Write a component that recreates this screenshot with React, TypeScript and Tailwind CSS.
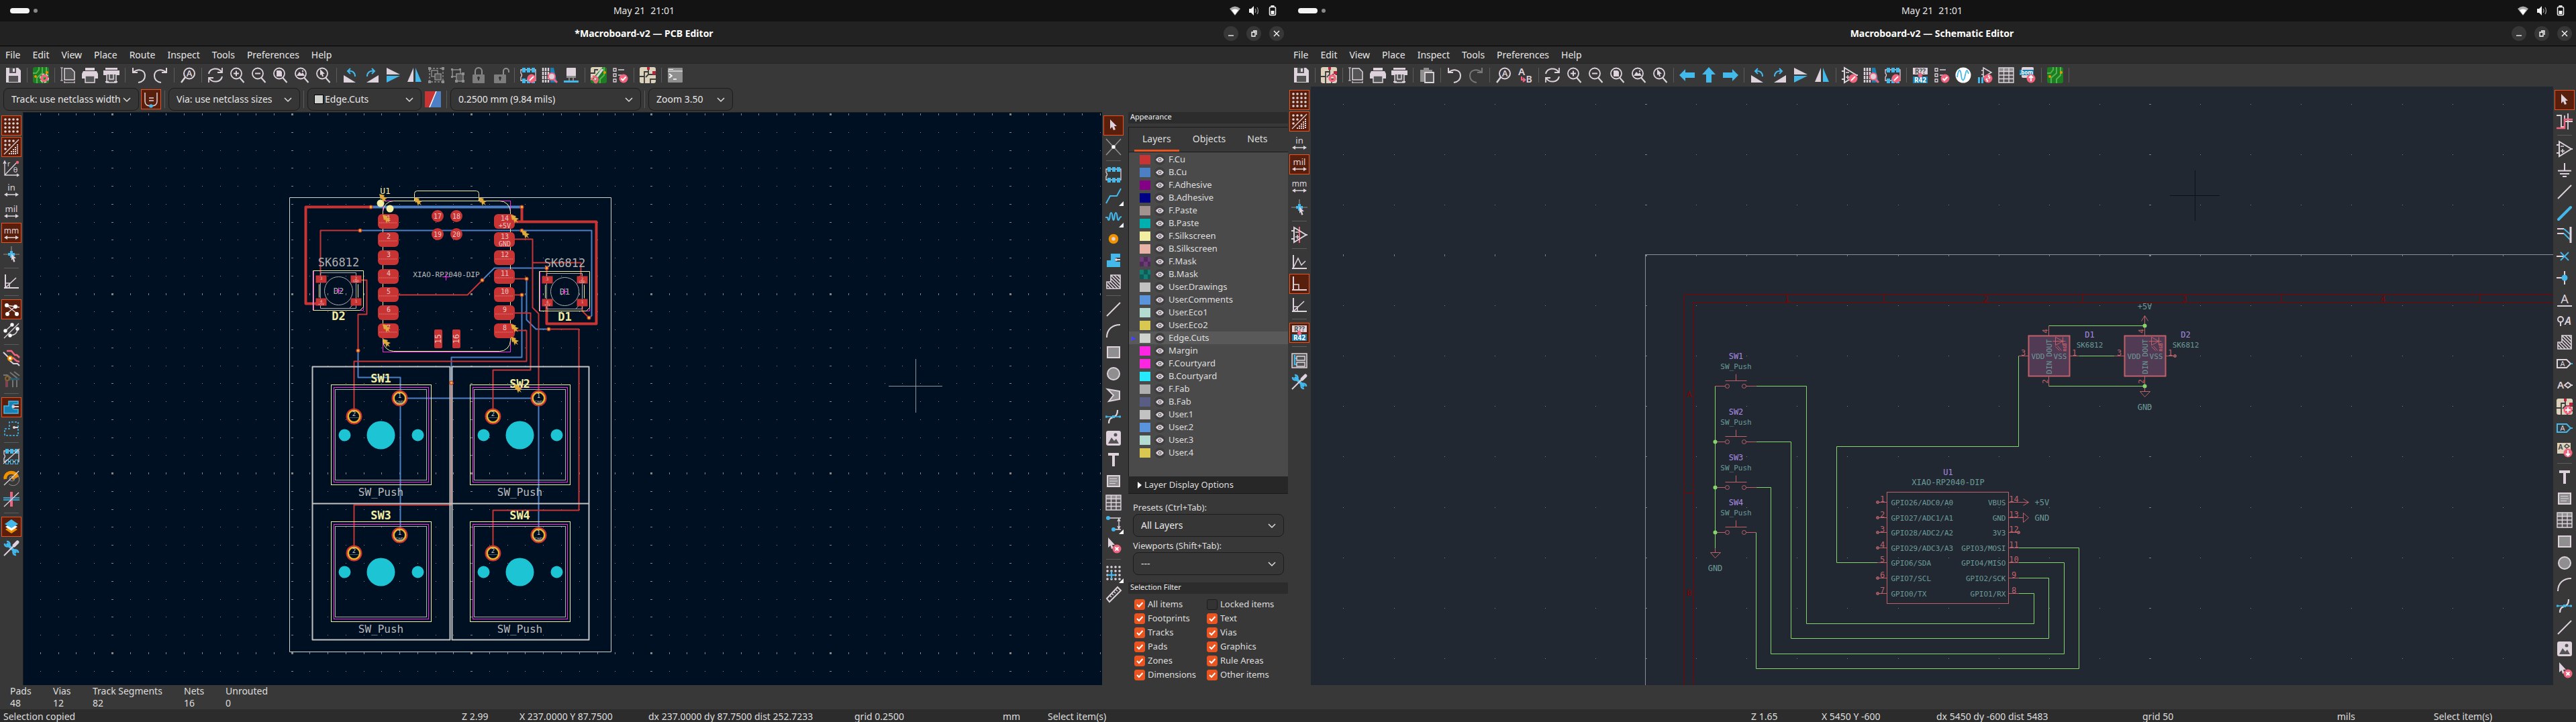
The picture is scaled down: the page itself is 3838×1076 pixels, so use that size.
import { useState } from "react";
import type { ReactNode } from "react";

const L = "#ded3dd";
const B = "#42b8eb";
const P = "#f2647e";
const O = "#f29100";
const G = "#8f8f8f";
const D = "#545454";

const line = { fill: "none", stroke: L, strokeWidth: 2 } as const;
const blue = { fill: "none", stroke: B, strokeWidth: 2 } as const;
const iconText = { fontFamily: "Noto Sans, sans-serif", textAnchor: "middle" } as const;

const magnifier = (
  <>
    <circle cx="11" cy="9.500" r="8" {...line} strokeWidth={1.800} />
    <path d="M16 15.500L22.500 23" {...line} strokeWidth={2.200} />
  </>
);
const badge = (mark: string) => (
  <>
    <circle cx="17" cy="17" r="6.500" fill={P} />
    <path d={mark} fill="none" stroke="#fff" strokeWidth="2" />
  </>
);
const pencil = badge("M14 20L20 14");
const check = badge("M13.500 17L16 19.500L20.500 14.500");
const axes = <path d="M3 1V22M1 21H23" {...line} />;
const chip = (
  <>
    <path d="M1 4H23V20H1V15Q4 12 1 9Z" {...line} strokeWidth={1.300} />
    <path d="M3 1h5v7h-5zM10 1h5v7h-5zM17 1h5v7h-5zM3 17h5v7h-5zM10 17h5v7h-5zM17 17h5v7h-5z" fill={B} />
  </>
);
const board = (
  <>
    <rect width="24" height="24" rx="3" fill="#1c7d22" />
    <path d="M0 9H5L9 4V0M6 24V16L14 9V0M14 24V18L20 12V0" fill="none" stroke="#53b34f" strokeWidth="2" />
    <circle cx="4" cy="14" r="2" fill={O} />
    <circle cx="21" cy="8" r="2" fill={O} />
  </>
);
const sheet = (
  <>
    <rect width="24" height="24" rx="3" fill="#dcd2bc" />
    <path d="M0 14H7V7H13M13 0V11H24M7 14V24M13 11L9 15M16 24V18H24" fill="none" stroke="#3b3b3b" strokeWidth="1.800" />
    <path d="M11 0h4v4h-4zM19 6h5v5h-5z" fill="#b8243c" />
  </>
);
const gear = (
  <>
    <circle cx="17" cy="16.500" r="5" fill="none" stroke={L} strokeWidth="4" strokeDasharray="3 2" />
    <circle cx="17" cy="16.500" r="4" fill="none" stroke={P} strokeWidth="3.500" />
  </>
);
const padlock = (open: boolean) => (
  <>
    <rect x="2" y="11" width="18" height="13" rx="1" fill={G} opacity="0.800" />
    <path d={open ? "M16 11V6a4 4 0 0 1 8 0V8" : "M6 11V6a5 5 0 0 1 10 0V11"} fill="none" stroke={G} strokeWidth="2" />
    <circle cx="11" cy="16" r="2" fill="#333" />
    <path d="M11 16V20" stroke="#333" strokeWidth="2" />
  </>
);
const corner = <path d="M24 17V24H17Z" fill="#fff" transform="translate(3 3)" />;
const unit = (name: string) => (
  <>
    <text x="12" y="13" fontSize={name === "mm" ? 12 : 13} fill={L} {...iconText}>{name}</text>
    <path d="M3 19H21" {...line} strokeWidth={1.500} />
    <path d="M1 19L6 16V22ZM23 19L18 16V22Z" fill={L} />
  </>
);
const hatch = (
  <>
    <path d="M2 22V12H8V2H22V22Z" {...line} strokeWidth={1.600} />
    <path d="M8 2L22 16M13 2L22 11M18 2L22 6M8 7L22 21M8 12L18 22M4 13L13 22M2 16L8 22" {...line} strokeWidth={1.700} />
  </>
);
const copperZone = (
  <>
    <path d="M2 22V12H8V2H22V8H17a3 3 0 0 0 0 6H22V22Z" fill={B} />
    <path d="M15 11H22" {...line} />
    <circle cx="16" cy="11" r="2" fill={L} />
  </>
);
const opamp = (
  <>
    <path d="M4 1L22 12L4 23ZM0 6H4M0 18H4M20 12H24" {...line} />
    <path d="M6 8H11M6 15H12M9 12V18" {...line} strokeWidth={1.500} />
  </>
);
const arrow = <path d="M7 3L17 13H13L15 18L12 19L10 14L7 17Z" fill={L} />;
const tagShape = "M1 6H15L21 12L15 18H1Z";
const refs = (
  <>
    <rect x="1" y="1" width="22" height="10" fill={L} />
    <rect x="1" y="14" width="22" height="10" fill="#1880b3" />
    <text x="12" y="10" fontSize="10" fontWeight="700" fill="#545454" {...iconText}>R??</text>
    <path d="M12 9V13" stroke={P} strokeWidth="4" />
    <path d="M8 12H16L12 17Z" fill={P} />
    <text x="12" y="23" fontSize="10" fontWeight="700" fill="#fff" {...iconText}>R42</text>
  </>
);
const dots = (rows: number[][]) =>
  rows.map((xs, r) => xs.map((x) => <circle key={`${r}-${x}`} cx={x} cy={3 + r * 6} r="1.800" fill={L} />));

const icons: Record<string, ReactNode> = {
  save: (
    <>
      <path d="M1 1H19L23 5V23H1Z" fill={L} />
      <path d="M6 1H16V9H6ZM5 13H19V22H5Z" fill={D} />
      <path d="M11 2H14V7H11Z" fill={L} />
    </>
  ),
  boardSetup: <>{board}{gear}</>,
  sheetSetup: <>{sheet}{gear}</>,
  page: (
    <>
      <path d="M6 2H16L21 7V19H6Z" fill={D} stroke={L} strokeWidth="1.500" />
      <path d="M2 1V20M0 1H4M0 20H4M6 23H21M6 21V24M21 21V24" {...line} strokeWidth={1.200} />
    </>
  ),
  print: (
    <>
      <path d="M5 1H19V5H5ZM2 6H22L24 10V17H0V10Z" fill={L} />
      <path d="M5 13H19V23H5Z" fill={D} stroke={L} strokeWidth="1.500" />
    </>
  ),
  plot: (
    <>
      <path d="M3 1H21V4H3ZM0 5H24V12H0Z" fill={L} />
      <path d="M5 11V23H19V11M9 11V18H15V11" fill={D} stroke={L} strokeWidth="1.500" />
      <path d="M3 22H8M16 22H21" {...line} />
    </>
  ),
  paste: (
    <>
      <path d="M2 4H20V22H2ZM7 1H15V5H7Z" fill={G} />
      <path d="M9 8H22V23H9Z" fill={D} stroke={L} strokeWidth="1.800" />
    </>
  ),
  undo: <path d="M3 1V8H10M3 8C12 1 21 5 21 13C21 19 17 22 11 23" {...line} />,
  redo: <path d="M21 1V8H14M21 8C12 1 3 5 3 13C3 19 7 22 13 23" {...line} />,
  redoOff: <path d="M21 1V8H14M21 8C12 1 3 5 3 13C3 19 7 22 13 23" {...line} stroke="#777" />,
  find: (
    <>
      <circle cx="14" cy="9.500" r="8" {...line} />
      <path d="M8 15L2 23" {...line} strokeWidth={2.500} />
      <text x="14" y="14" fontSize="13" fontWeight="600" fill={L} {...iconText}>A</text>
    </>
  ),
  replace: (
    <>
      <text x="7" y="12" fontSize="15" fontWeight="600" fill={L} {...iconText}>A</text>
      <text x="18" y="23" fontSize="14" fontWeight="600" fill={L} {...iconText}>B</text>
      <path d="M7 14V19H12M9 16L12.500 19L9 22" fill="none" stroke={P} strokeWidth="2" />
    </>
  ),
  refresh: (
    <>
      <path d="M2 10C4 1 16 0 21 7M22 14C20 23 8 24 3 17" {...line} />
      <path d="M22 1V8H15M2 23V16H9" {...line} strokeWidth={1.800} />
    </>
  ),
  zoomIn: <>{magnifier}<path d="M7 9.500H15M11 5.500V13.500" {...line} /></>,
  zoomOut: <>{magnifier}<path d="M7 9.500H15" {...line} /></>,
  zoomFit: <>{magnifier}<path d="M7 5H13L15 7V14H7Z" fill={L} /></>,
  zoomObjects: <>{magnifier}<path d="M5 13L9 7L12 10L14 8L17 13Z" fill={L} /><circle cx="14" cy="6" r="1.200" fill={L} /></>,
  zoomSelection: <>{magnifier}<path d="M8 3L15 10H12L13 14H11L10 11L8 12Z" fill={L} /></>,
  rotateCcw: <><path d="M2 23V12L20 23Z" fill={L} /><path d="M19 14C19 8 15 5 9 6M12 2L8 6L12 10" {...blue} /></>,
  rotateCw: <><path d="M22 23V12L4 23Z" fill={L} /><path d="M5 14C5 8 9 5 15 6M12 2L16 6L12 10" {...blue} /></>,
  flipV: <><path d="M2 1L22 11H2Z" fill={L} /><path d="M2 23L22 13H2Z" fill={B} /></>,
  flipH: <><path d="M10 1V22H1Z" fill={L} /><path d="M13 1V22H22Z" fill={B} /></>,
  group: (
    <g fill="none" stroke={G} strokeWidth="1.400">
      <rect x="2" y="2" width="20" height="20" strokeDasharray="3 2" />
      <rect x="5" y="5" width="9" height="9" />
      <rect x="10" y="10" width="9" height="9" fill={D} />
      <path d="M0 0h4v4h-4zM20 0h4v4h-4zM0 20h4v4h-4zM20 20h4v4h-4z" fill={G} stroke="none" />
    </g>
  ),
  ungroup: (
    <g fill="none" stroke={G} strokeWidth="1.500">
      <rect x="4" y="4" width="12" height="10" />
      <rect x="10" y="10" width="10" height="11" fill={D} />
      <path d="M2 2h3v3h-3zM14 2h3v3h-3zM2 13h3v3h-3zM18 8h4v4h-4zM8 19h4v4h-4zM18 19h4v4h-4z" fill={G} stroke="none" />
    </g>
  ),
  lock: padlock(false),
  unlock: padlock(true),
  footprintEdit: <>{chip}{pencil}</>,
  library: (
    <>
      <path d="M2 1V23M6 1V23M10 1V23" {...line} strokeWidth={2.500} strokeDasharray="5 1" />
      <path d="M13 1H18L23 23H13Z" fill="#1880b3" />
      <circle cx="15" cy="14" r="5" fill={L} stroke={P} strokeWidth="2" />
      <path d="M18 18L23 23" stroke={P} strokeWidth="3" />
    </>
  ),
  fromSchematic: (
    <>
      <rect x="5" y="1" width="14" height="15" rx="1" fill={L} />
      <path d="M5 13H19V16H5Z" fill={G} />
      <path d="M9 16V20M15 16V20" {...line} strokeWidth={1} />
      <path d="M1 20H23V23H1Z" fill={B} />
    </>
  ),
  updatePcb: <>{board}<path d="M3 0H18L0 20V3Q0 0 3 0Z" fill="#dcd2bc" /><path d="M0 9H6V4H11" fill="none" stroke="#3b3b3b" strokeWidth="1.800" /><path d="M18 3L6 19" stroke={L} strokeWidth="3" /><path d="M1 16L9 24M3 14C10 14 12 18 9 22" stroke={P} strokeWidth="3" fill="none" /></>,
  drc: <><path d="M2 2h4v4h-4zM2 10h4v4h-4zM2 18h4v4h-4z" {...line} strokeWidth={1.300} /><path d="M9 4H18M9 12H14" {...line} strokeWidth={1.500} />{check}</>,
  sheet,
  board,
  console: (
    <>
      <rect x="1" y="1" width="22" height="22" rx="1" fill={G} />
      <path d="M1 6H23M2 3.500H9" stroke="#fff" strokeWidth="1.200" />
      <path d="M3 10L7 13L3 16M9 18H14" fill="none" stroke="#fff" strokeWidth="1.600" />
    </>
  ),
  arrowLeft: <path d="M0 12L9 3V8H23V16H9V21Z" fill={B} />,
  arrowUp: <path d="M12 0L22 11H16V23H8V11H2Z" fill={B} />,
  arrowRight: <path d="M24 12L15 3V8H1V16H15V21Z" fill={B} />,
  symbolEdit: <>{opamp}{pencil}</>,
  annotate: refs,
  simulate: <><circle cx="12" cy="12" r="11.500" fill="#fff" /><path d="M3 15C5 2 8 2 9 12S13 22 15 12S18 4 20 10" fill="none" stroke={B} strokeWidth="1.800" /></>,
  assign: <><path d="M10 1L22 8L10 15ZM7 5H10M7 11H10" {...line} strokeWidth={1.500} /><path d="M2 15h3v9h-3zM7 15h3v9h-3z" fill={B} />{badge("M14 19L16 17M18 17L20 15M17 14L19 13M15 21L17 20")}</>,
  table: (
    <>
      <path d="M1 1H23V6H1Z" fill={G} />
      <path d="M1 6H23V23H1Z" fill={D} />
      <path d="M1 1H23V23H1ZM1 6.500H23M1 12H23M1 17.500H23M8.500 1V23M16 1V23" {...line} strokeWidth={1.400} />
    </>
  ),
  bom: (
    <>
      <rect x="3" y="0" width="18" height="16" rx="2" fill={L} />
      <rect x="0" y="4" width="21" height="8" fill="#1880b3" />
      <text x="10" y="11" fontSize="8" fontWeight="700" fill="#fff" {...iconText}>.bom</text>
      {badge("M17 21V13M14 16L17 13L20 16")}
    </>
  ),
  grid: dots([[3, 9, 15, 21], [3, 9, 15, 21], [3, 9, 15, 21], [3, 9, 15, 21]]),
  gridOverride: (
    <>
      {dots([[3, 9, 15], [3, 9], [3]])}
      <path d="M1 23L23 1" {...line} strokeWidth={1.300} />
      <path d="M21 8V23M18 12V23M15 15V23M12 18V23M9 21V23" {...line} strokeDasharray="2 1" />
    </>
  ),
  polar: (
    <>
      <path d="M2 2V22H23M2 22L21 2M0 5L2 1L4 5M20 20L23 22L20 24" {...line} strokeWidth={1.300} />
      <circle cx="21" cy="3" r="2.200" fill={P} />
      <text x="8" y="9" fontSize="10" fill={L} {...iconText}>r</text>
      <text x="18" y="18" fontSize="11" fill={L} {...iconText}>θ</text>
    </>
  ),
  in: unit("in"),
  mil: unit("mil"),
  mm: unit("mm"),
  crosshair: (
    <>
      <path d="M0 12H24M12 0V14" stroke={G} strokeWidth="1.200" />
      <path d="M7 12H17M12 7V17" stroke={B} strokeWidth="4" />
      <path d="M12 11L19 18H16L17.500 23L15 23.500L14 19L12 21Z" fill={L} />
    </>
  ),
  angle45: <>{axes}<path d="M3 21L19 6M3 14H9V20" {...line} strokeWidth={1.600} /></>,
  angle90: <>{axes}<path d="M3 13H11V20" {...line} strokeWidth={1.500} /></>,
  angleFree: <>{axes}<path d="M3 20L10 6L15 16L21 10" {...line} strokeWidth={1.500} /></>,
  ratsnest: <><path d="M5 6L20 18M5 6L24 9M4 19L19 7M5 6L18 8" {...line} strokeWidth={1.500} />{[[5, 6], [18, 8], [6, 19], [20, 19]].map(([x, y]) => <circle key={x} cx={x} cy={y} r="3" fill="#fff" />)}</>,
  ratsCurved: <><path d="M1 23L23 1M3 12L13 3M10 19Q21 18 21 9" {...line} strokeWidth={1.400} />{[[3, 12], [13, 3], [10, 19], [21, 9]].map(([x, y]) => <circle key={x} cx={x} cy={y} r="2.700" fill="#fff" />)}</>,
  netColors: <><path d="M0 3L8 11V14L15 20H21L24 23" {...line} /><path d="M5 1H12L17 7H20L24 11M14 11L20 16L24 17" fill="none" stroke={P} strokeWidth="2.500" /><circle cx="10" cy="12" r="3" fill="#fff" stroke={O} strokeWidth="2" /></>,
  highContrast: <g fill="none" strokeWidth="2" opacity="0.700"><path d="M0 5H6L14 12V23M10 1L20 9V23M16 0L24 6" stroke={G} /><path d="M5 12V23" stroke="#a14b5e" strokeWidth="4" /><path d="M7 11H24" stroke="#2a6d8a" strokeWidth="3" /><circle cx="6" cy="10" r="3" stroke="#a5712a" /></g>,
  zoneFill: <><path d="M1 21V10H8V3H22V7H17a4 4 0 0 0 0 8H22V21Z" fill="#1880b3" stroke={B} strokeWidth="1.500" /><circle cx="15" cy="11" r="2.200" fill={L} /><path d="M15 11H23" {...line} /></>,
  zoneOutline: <><path d="M2 22V12H9V2H22V22Z" {...blue} strokeWidth={1.500} strokeDasharray="3 2" /><circle cx="16" cy="10" r="2" fill={L} /><path d="M15 10H22" {...line} /></>,
  padSketch: <>{chip}<path d="M4 18h3v5h-3zM11 18h3v5h-3zM18 18h3v5h-3z" fill="#383838" /><path d="M0 23L24 1" {...line} strokeWidth={1.300} /></>,
  viaSketch: <><path d="M3 14a9 8 0 0 1 17 -5L13 13" fill="none" stroke={O} strokeWidth="5" /><circle cx="13" cy="13" r="4" fill="none" stroke={G} /><path d="M21 8A9 9 0 0 1 8 21" fill="none" stroke={G} /><path d="M1 23L23 2" {...line} strokeWidth={1.300} /></>,
  trackSketch: <><path d="M12 1V23" stroke={P} strokeWidth="4" /><path d="M0 10H24M0 13H24" {...blue} strokeWidth={1.500} /><path d="M1 23L23 2" {...line} strokeWidth={1.300} /></>,
  layers: <><path d="M3 16L12 11L21 16L12 22Z" fill={O} /><path d="M3 12L12 7L21 12L12 18Z" fill="#fff" /><path d="M2 8L12 1L22 8L12 14Z" fill={B} /></>,
  tools: <><path d="M5 5L19 19" stroke={B} strokeWidth="4" /><path d="M2 5a4 4 0 0 0 7 3M5 2a4 4 0 0 1 4 6M15 16a4 4 0 0 0 4 6M22 19a4 4 0 0 0-7-3" {...blue} strokeWidth={2.500} /><path d="M1 23L15 9" {...line} /><path d="M16 8L21 3" {...line} strokeWidth={5} strokeLinecap="round" /></>,
  select: arrow,
  highlight: <><path d="M1 0L12 12L23 0M1 24L12 12L23 24" fill="none" stroke={G} strokeWidth="1.600" /><circle cx="12" cy="12" r="2.800" fill="#fff" /></>,
  footprint: chip,
  route: <><path d="M1 23L7 12H17L23 1" {...blue} />{corner}</>,
  tune: <><path d="M0 12H3C4 12 3 16 5 16S6 5 8.500 5S10 16 12 16S13 5 15.500 5S17 16 19 16S20 11 24 11" {...blue} strokeWidth={2.200} />{corner}</>,
  via: <circle cx="12" cy="12" r="5" fill={L} stroke={O} strokeWidth="4.500" />,
  zone: copperZone,
  ruleArea: hatch,
  line: <path d="M2 22L22 2" {...line} />,
  arc: <path d="M2 22C2 10 10 3 22 3" {...line} />,
  rect: <rect x="3" y="4" width="18" height="16" fill={G} stroke={L} strokeWidth="2" />,
  circle: <circle cx="12" cy="12" r="9" fill={G} stroke={L} strokeWidth="2" />,
  polygon: <path d="M3 3L21 6V18L5 21L12 12Z" fill={G} stroke={L} strokeWidth="2" />,
  bezier: <><path d="M5 22C5 8 18 18 18 2" {...line} strokeWidth={2.200} /><path d="M1 12H23" {...blue} strokeWidth={1.500} /><path d="M0 10.500h3v3h-3zM20 10.500h3v3h-3zM10 10h4v4h-4z" fill={B} /></>,
  image: <><rect x="1" y="1" width="22" height="22" rx="3" fill={L} /><path d="M4 20L9 11L13 16L16 13L20 20Z" fill={D} /><circle cx="15" cy="7" r="2.500" fill={D} /></>,
  text: <path d="M4 2H20V6H14V22H10V6H4Z" fill={L} />,
  textBox: <><rect x="3" y="4" width="18" height="16" fill={G} stroke={L} strokeWidth="2" /><path d="M6 8.500H17M6 12H18M6 15.500H15" {...line} strokeWidth={1.200} /></>,
  dimension: <><path d="M4 3H23M12 20H23M20 5V18M18 8L20 4L22 8M18 15L20 19L22 15" {...line} strokeWidth={1.300} /><circle cx="4" cy="3" r="3" fill={B} /><circle cx="12" cy="20" r="3" fill={B} />{corner}</>,
  delete: <><path d="M4 0L14 11H10L12 16L9 17L7.500 12L4 15Z" fill={L} />{badge("M14.500 14.500L19.500 19.500M19.500 14.500L14.500 19.500")}</>,
  gridOrigin: <>{dots([[3, 9, 15, 21], [3, 9, 15, 21], [3, 9, 15, 21], [3, 9, 15, 21]])}<path d="M3 15H15M9 9V21" {...blue} />{corner}</>,
  measure: <><path d="M2 18L18 1L23 6L6 23Z" {...line} /><path d="M7 14L9 16M10 11L12 13M13 8L15 10M16 5L18 7" {...line} strokeWidth={1.500} /></>,
  highlightNet: <><path d="M0 3H7V20H12V3M17 0V24M12 12H24" {...line} strokeWidth={1.800} /><path d="M0 22H12V9H24" fill="none" stroke={P} strokeWidth="2.500" /></>,
  symbol: opamp,
  symbolPins: <><path d="M12 0V24" stroke={P} strokeWidth="2" />{opamp}</>,
  power: <path d="M12 1V12M2 12.500H22M5 17H19M9 21H15" {...line} />,
  bus: <path d="M3 21L21 3" {...blue} strokeWidth={4} strokeLinecap="round" />,
  busEntry: <><path d="M1 3H11M1 10H11" {...line} /><path d="M11 3L20 11M11 10L20 19" {...blue} /><path d="M21 0V24" {...line} strokeWidth={3} /></>,
  noConnect: <><path d="M0 12H12" {...line} /><path d="M6 6L18 18M18 6L6 18" {...blue} strokeWidth={1.800} /></>,
  junction: <><path d="M0 12H12M12 2V22" {...line} /><circle cx="12" cy="12" r="4.500" fill={B} /></>,
  label: <><path d="M1 22H23" {...line} /><text x="12" y="18" fontSize="18" fill={L} {...iconText}>A</text></>,
  netClass: <><circle cx="6" cy="10" r="4" {...line} /><path d="M6 14V20" {...line} /><text x="17" y="18" fontSize="16" fontStyle="italic" fontWeight="600" fill={L} {...iconText}>A</text></>,
  globalLabel: <><path d={tagShape} {...line} /><path d="M21 12H24" {...blue} /><text x="9" y="16" fontSize="11" fill={L} {...iconText}>A</text></>,
  hierLabel: <><text x="6" y="17" fontSize="15" fontWeight="600" fill={L} {...iconText}>A</text><path d="M12 12L17 8L22 12L17 16ZM22 12H24" {...line} /></>,
  addSheet: <>{sheet}{badge("M17 13V21M13 17H21")}</>,
  sheetPin: <><path d={tagShape} {...blue} /><path d="M21 12H24" {...blue} /><text x="9" y="16" fontSize="11" fill={L} {...iconText}>A</text></>,
  syncPins: <><rect x="1" y="2" width="20" height="16" fill="#dcd2bc" /><text x="6" y="12" fontSize="10" fontWeight="700" fill="#444" {...iconText}>A</text><path d="M12 7L15 4L19 7L15 10Z" fill="none" stroke="#444" strokeWidth="1.500" />{badge("M17 13V21M14 18L17 21L20 18")}</>,
  hierarchy: <><path d="M1 2H23V23H1Z" fill={D} stroke={L} strokeWidth="1.500" /><path d="M5 4V18H8M5 9H8" {...blue} /><path d="M8 6H20V12H8ZM8 15H20V21H8Z" {...line} strokeWidth={1.400} /></>,
  refs,
  trackWidth: <><path d="M3 2V15Q3 22 12 22Q21 22 21 15V2M9 10H16M9 14H16" {...line} strokeWidth={1.500} /><circle cx="12" cy="22" r="2.800" fill={B} /></>,
};

function Icon({ name }: { name: string }) {
  return <svg viewBox="0 0 24 24" className="size-6 shrink-0 overflow-visible">{icons[name]}</svg>;
}

// "|" marks a separator, a leading "*" marks a pressed tool
function ToolStrip({ tools, vertical = false }: { tools: string; vertical?: boolean }) {
  return (
    <div role="toolbar" className={vertical ? "flex w-[34px] shrink-0 flex-col items-center pt-[3px]" : "flex h-[34px] items-center pl-1"}>
      {tools.split(" ").map((tool, i) => {
        if (tool === "|") {
          return vertical ? (
            <div key={i} className="flex h-[9px] w-[22px] shrink-0 items-center"><div className="h-px w-full bg-[#5c5c5c]" /></div>
          ) : (
            <div key={i} className="flex w-[9px] shrink-0 justify-center"><div className="h-[22px] w-px bg-[#5c5c5c]" /></div>
          );
        }
        const active = tool.startsWith("*");
        const name = active ? tool.slice(1) : tool;
        return (
          <div key={i} className="flex size-8 shrink-0 items-center justify-center">
            <button aria-label={name} aria-pressed={active} className={`flex size-[30px] items-center justify-center border ${active ? "border-[#e95420] bg-[#58200c]" : "border-transparent"}`}>
              <Icon name={name} />
            </button>
          </div>
        );
      })}
    </div>
  );
}

function Chevron() {
  return (
    <svg viewBox="0 0 12 12" className="pointer-events-none absolute right-3 size-3">
      <path d="M1 4L6 9L11 4" fill="none" stroke="#ddd" strokeWidth="1.500" />
    </svg>
  );
}

function Picker({ label, value, className, swatch, id }: { label?: string; value: string; className: string; swatch?: boolean; id?: string }) {
  return (
    <div className={`relative flex items-center ${className}`}>
      {swatch && <span className="absolute left-[10px] h-[14px] w-[14px] border border-black bg-[#d0d2cd]" />}
      <select id={id} aria-label={label} className={`h-full w-full appearance-none rounded-lg border border-[#1c1c1c] bg-[#363636] text-[#e8e8e8] ${swatch ? "pl-[25px]" : "pl-[11px]"}`}>
        <option>{value}</option>
      </select>
      <Chevron />
    </div>
  );
}

function SystemBar() {
  return (
    <div className="grid h-8 grid-cols-3 items-center bg-[#131313] px-[15px] text-sm text-[#e4e4e4]">
      <div className="flex items-center gap-[6px]">
        <div className="h-2 w-[29px] rounded-full bg-[#f4f4f4]" />
        <div className="size-[6px] rounded-full bg-[#888]" />
      </div>
      <div className="flex justify-center gap-2"><span>May 21</span><span>21:01</span></div>
      <div className="flex justify-end gap-3">
        <svg viewBox="0 0 16 16" className="size-4"><path d="M0 5Q8 -2 16 5L8 15Z" fill="#aaa" /><path d="M3 7Q8 4 13 7L8 14Z" fill="#fff" /></svg>
        <svg viewBox="0 0 16 16" className="size-4"><path d="M1 5H4L8 1V15L4 11H1Z" fill="#f4f4f4" /><path d="M10 5Q12 8 10 11M13 3Q16 8 13 13" fill="none" stroke="#999" strokeWidth="1.300" /></svg>
        <svg viewBox="0 0 16 16" className="size-4"><path d="M5.500 1H10.500" stroke="#f4f4f4" strokeWidth="2" /><rect x="3.500" y="2.500" width="9" height="12" rx="1.500" fill="none" stroke="#f4f4f4" strokeWidth="1.500" /><path d="M5.500 8H10.500V13H5.500Z" fill="#f4f4f4" /></svg>
      </div>
    </div>
  );
}

const windowMarks: Record<string, string> = {
  Minimize: "M7 14H15",
  Restore: "M8 9H13V15H8ZM10 7H15V13",
  Close: "M7 7L15 15M15 7L7 15",
};

function TitleBar({ title }: { title: string }) {
  return (
    <div className="grid h-[37px] grid-cols-[1fr_auto_1fr] items-center border-b border-black bg-[#222] px-[6px]">
      <div />
      <h1 className="text-sm font-bold text-white">{title}</h1>
      <div className="flex justify-end gap-3">
        {Object.entries(windowMarks).map(([name, d]) => (
          <button key={name} aria-label={name} className="size-[22px] rounded-full bg-[#373737]">
            <svg viewBox="0 0 22 22" className="size-[22px]"><path d={d} fill="none" stroke="#fff" strokeWidth="1.300" /></svg>
          </button>
        ))}
      </div>
    </div>
  );
}

function MenuBar({ items }: { items: string[] }) {
  return (
    <nav className="flex h-[26px] items-center gap-[18px] border-b border-[#262626] bg-[#2c2c2c] pl-2 text-sm text-[#e6e6e6]">
      {items.map((item) => <button key={item}>{item}</button>)}
    </nav>
  );
}

// Tick marks: a dot at each grid point, stretched on every tenth row and column
function gridPath(x0: number, y0: number, step: number, fromX: number, toX: number, fromY: number, toY: number) {
  let d = "";
  for (let i = fromX; i <= toX; i++) {
    for (let j = fromY; j <= toY; j++) {
      const w = i % 10 === 0 ? 3 : 1;
      const h = j % 10 === 0 ? 3 : 1;
      const x = Math.round(x0 + i * step) - (w - 1) / 2;
      const y = Math.round(y0 + j * step) - (h - 1) / 2;
      d += `M${x} ${y}h${w}v${h}h-${w}z`;
    }
  }
  return d;
}

const RED = "#c83434";
const BLUE = "#4d7fc4";
const SILK = "#f2eda1";
const FAB = "#afafaf";
const PINK = "#ff26e2";
const stroke = "DejaVu Sans Mono, monospace";

function Marker({ x, y }: { x: number; y: number }) {
  return <path transform={`translate(${x} ${y})`} d="M0 0L8 2L6.500 4L12 6L8.500 8L11 12L7 9.500L6 13L4 7L2 8Z" fill="#e0aa3c" />;
}

function Via({ x, y }: { x: number; y: number }) {
  return <circle cx={x} cy={y} r="2.500" fill="#e8b52c" stroke={RED} strokeWidth="1.200" />;
}

function Led({ x, y, name }: { x: number; y: number; name: string }) {
  const pads = [[-34, -23, "3"], [18, -23, "2"], [-34, 11, "4"], [18, 11, "1"]] as const;
  return (
    <g transform={`translate(${x} ${y})`} fill="none" fontFamily={stroke} textAnchor="middle">
      <path d="M-37 -30V29M32 29H37V24" stroke={PINK} />
      <path d="M-38 29V-30H37V24L32 29H-38M-29 -10V10M29 -10V10" stroke={SILK} />
      <path d="M-27 -27H26V26H-27ZM16 26L26 16" stroke={FAB} />
      <circle r="21" stroke={FAB} />
      {pads.map(([px, py, n]) => (
        <g key={n}>
          <rect x={px} y={py} width="16" height="11" fill={RED} />
          <text x={px + 8} y={py + 6} fontSize="6" fill="#e9b4b4">{n}</text>
          <text x={px + 8} y={py + 10} fontSize="5" fill="#e9b4b4">{n === "4" ? "+5V" : n === "2" ? "GND" : ""}</text>
        </g>
      ))}
      <text y="4" fontSize="13" fill={FAB}>{name}</text>
      <path d="M-5 0H5M0 -5V5" stroke={PINK} />
      <text y="-37" fontSize="17" fill={FAB}>SK6812</text>
      <text y="43" fontSize="17" fontWeight="700" fill={SILK}>{name}</text>
    </g>
  );
}

function Switch({ x, y, name, drop = 0 }: { x: number; y: number; name: string; drop?: number }) {
  return (
    <g transform={`translate(${x} ${y})`} fontFamily={stroke} textAnchor="middle">
      <g fill="none">
        <rect x="-74" y="-75" width="149" height="149" stroke={SILK} />
        <rect x="-70" y="-71" width="141" height="141" stroke={PINK} />
        <rect x="-68" y="-68" width="136" height="135" stroke={FAB} />
      </g>
      <circle r="21" fill="#1cc4d4" />
      <circle cx="-54" r="9" fill="#1cc4d4" />
      <circle cx="55" r="9" fill="#1cc4d4" />
      {[[28, -55, "1", "GND"], [-40, -28, "2", ""]].map(([px, py, n, net]) => (
        <g key={n}>
          <circle cx={px} cy={py} r="9" fill="#001023" stroke="#e8b52c" strokeWidth="3" />
          <circle cx={px} cy={py} r="11" fill="none" stroke={RED} strokeWidth="2" />
          <text x={px} y={Number(py) - 1} fontSize="9" fill="#ccc">{n}</text>
          <text x={px} y={Number(py) + 8} fontSize="7" fill="#aaa">{net}</text>
        </g>
      ))}
      <path d="M-47 -26H-33" stroke="#777" strokeDasharray="2 1" />
      <text y={-79 + drop} fontSize="17" fontWeight="700" fill={SILK}>{name}</text>
      <text y="90" fontSize="16" fill="#b9b9b9">SW_Push</text>
    </g>
  );
}

function PcbCanvas() {
  const leftPads = ["1", "2", "3", "4", "5", "6", "7"];
  const rightPads = ["14", "13", "12", "11", "10", "9", "8"];
  const markers = [[145, 19], [197, 24], [293, 24], [150, 50], [341, 50], [357, 73], [150, 213], [341, 213], [150, 235], [341, 232], [346, 303]];
  const vias = [[132, 38], [357, 38], [116, 73], [357, 73], [298, 147], [394, 129], [364, 145], [357, 169], [397, 220], [457, 203], [113, 252], [252, 300]];
  return (
    <svg className="min-w-0 flex-1 self-stretch border-t border-l border-[#1c1c1c] bg-[#001023]" aria-label="Board canvas">
      <path d={gridPath(132, 2, 26.76, -4, 56, 0, 31)} fill="#858585" />
      <g transform="translate(385 102)">
        <g transform="translate(0.500 0.500)" fill="none" strokeLinejoin="round">
          <rect x="11" y="24" width="479" height="677" stroke="#d0d2cd" />
          <path d="M132 38H357M113 252V292H176V527M176 323H382V527" stroke={BLUE} strokeWidth="2" />
          <path d="M132 38H357" stroke={BLUE} strokeWidth="4" />
          <path d="M116 73H461V200L457 203M298 147L316 129H394M364 145V206L378 220H397M357 169V262H252V300" stroke={BLUE} strokeWidth="2" />
          <path d="M132 38H35V182H52M357 38V60M345 60H468V212H394V185" stroke={RED} strokeWidth="4" />
          <path
            d="M116 73H57V145M115 147H126V198H113V252M172 169H276L298 147M394 129V145M345 86H373V188L382 197V323M373 121H445V145M447 185V193L457 203M345 145H364M345 169H357M397 220H442V490H314V554M252 300V482H107V554M345 196H370V281H314V350M345 222H364V268H107V350"
            stroke={RED}
            strokeWidth="2"
          />
          <rect x="45" y="276" width="205" height="407" stroke="#c2c2c2" strokeWidth="2" />
          <rect x="253" y="276" width="204" height="407" stroke="#c2c2c2" strokeWidth="2" />
          <path d="M45 480H457" stroke="#c2c2c2" strokeWidth="2" />
        </g>
        <g transform="translate(0.500 0.500)" fill="none">
          <rect x="150" y="29" width="190" height="225" stroke={PINK} />
          <rect x="150" y="29" width="190" height="224" rx="16" stroke={SILK} />
          <path d="M197 29V18Q197 14 201 14H289Q293 14 293 18V29" stroke={SILK} />
        </g>
        <g fontFamily={stroke} textAnchor="middle" fontSize="10" fill="#edc4c4">
          {leftPads.map((n, i) => (
            <g key={n}>
              <rect x="143" y={Math.round(49 + i * 27.2)} width="31" height="22" rx="6" fill={RED} />
              <text x="159" y={Math.round(59 + i * 27.2)}>{n}</text>
              <path d={`M145 ${Math.round(62 + i * 27.2)}H172`} stroke="#dd7a7a" strokeDasharray="2 1" />
            </g>
          ))}
          {rightPads.map((n, i) => (
            <g key={n}>
              <rect x="316" y={Math.round(49 + i * 27.2)} width="31" height="22" rx="6" fill={RED} />
              <text x="332" y={Math.round(59 + i * 27.2)}>{n}</text>
              {i > 1 ? (
                <path d={`M318 ${Math.round(62 + i * 27.2)}H345`} stroke="#dd7a7a" strokeDasharray="2 1" />
              ) : (
                <text x="332" y={Math.round(70 + i * 27.2)}>{i === 0 ? "+5V" : "GND"}</text>
              )}
            </g>
          ))}
          {[[232, 52, "17"], [260, 52, "18"], [232, 79, "19"], [260, 79, "20"]].map(([x, y, n]) => (
            <g key={n}>
              <circle cx={x} cy={y} r="9" fill={RED} />
              <text x={x} y={Number(y) + 4}>{n}</text>
            </g>
          ))}
          {[[233, "15"], [260, "16"]].map(([x, n]) => (
            <g key={n} transform={`translate(${x} 235)`}>
              <rect x="-6" y="-14" width="12" height="28" rx="2" fill={RED} />
              <text transform="rotate(-90)" y="4" fontSize="12">{n}</text>
            </g>
          ))}
        </g>
        <circle cx="147" cy="33" r="5.500" fill={SILK} />
        <circle cx="161" cy="41" r="5.500" fill={SILK} />
        <text x="154" y="19" fontSize="13" fill={SILK} fontFamily={stroke} textAnchor="middle">U1</text>
        <text x="245" y="143" fontSize="11" fill="#b9b9b9" fontFamily={stroke} textAnchor="middle">XIAO-RP2040-DIP</text>
        <path d="M239 142.500H250M244.500 137V148" stroke={PINK} />
        <g transform="translate(0.500 0.500)">
          <Led x={84} y={163} name="D2" />
          <Led x={421} y={164} name="D1" />
          <Switch x={147} y={378} name="SW1" />
          <Switch x={354} y={378} name="SW2" drop={8} />
          <Switch x={147} y={582} name="SW3" />
          <Switch x={354} y={582} name="SW4" />
          {vias.map(([x, y]) => <Via key={`${x}-${y}`} x={x} y={y} />)}
        </g>
        {markers.map(([x, y]) => <Marker key={`${x}-${y}`} x={x} y={y} />)}
      </g>
      <path d="M1289 407.500H1369M1329.500 367V447" stroke="#8c949c" />
    </svg>
  );
}

const WIRE = "#86d46a";
const PIN = "#c06068";
const VALUE = "#6b9b98";
const REF = "#a98be0";
const WINE = "#840000";

function NoConnect({ x, y }: { x: number; y: number }) {
  return <circle cx={x} cy={y} r="2" fill="#7d5a62" stroke={PIN} />;
}

function SchLed({ x, name }: { x: number; name: string }) {
  return (
    <g transform={`translate(${x} 0)`}>
      <path d="M30 45V60M30 120V135M-15 90H0M61 90H75" stroke={PIN} fill="none" />
      <rect x="0" y="60" width="61" height="60" fill="#503a54" stroke={PIN} strokeWidth="2" />
      <g fontSize="11" fill={VALUE} textAnchor="middle">
        <text x="14" y="94">VDD</text>
        <text x="47" y="94">VSS</text>
        <text transform="translate(34 107) rotate(-90)">DIN</text>
        <text transform="translate(34 78) rotate(-90)">DOUT</text>
      </g>
      <g fontSize="12" fill={PIN} textAnchor="middle">
        <text x="-8" y="89">3</text>
        <text x="68" y="89">1</text>
        <text transform="translate(28 53) rotate(-90)" fontSize="11">4</text>
        <text transform="translate(28 128) rotate(-90)" fontSize="11">2</text>
        <text transform="translate(56 77) rotate(-90)" fontSize="7" fontWeight="700">RGB</text>
      </g>
      <path d="M36 68H55M40 62V74L51 68ZM51 62V74M40 76L46 82M43 75L49 82" stroke={PIN} fill="none" />
      <text x="91" y="62" fontSize="12" fill={REF} textAnchor="middle">{name}</text>
      <text x="91" y="77" fontSize="11" fill={VALUE} textAnchor="middle">SK6812</text>
    </g>
  );
}

function PushButton({ y, name }: { y: number; name: string }) {
  return (
    <g transform={`translate(0 ${y})`} textAnchor="middle">
      <path d="M55 0H70M101 0H116M70 -8H102M86 -8V-18" stroke={PIN} fill="none" />
      <circle cx="73" cy="0" r="3" stroke={PIN} fill="none" />
      <circle cx="98" cy="0" r="3" stroke={PIN} fill="none" />
      <text x="86" y="-41" fontSize="12" fill={REF}>{name}</text>
      <text x="86" y="-26" fontSize="11" fill={VALUE}>SW_Push</text>
    </g>
  );
}

const chipPins = [
  ["1", "GPIO26/ADC0/A0", "14", "VBUS"],
  ["2", "GPIO27/ADC1/A1", "13", "GND"],
  ["3", "GPIO28/ADC2/A2", "12", "3V3"],
  ["4", "GPIO29/ADC3/A3", "11", "GPIO3/MOSI"],
  ["5", "GPIO6/SDA", "10", "GPIO4/MISO"],
  ["6", "GPIO7/SCL", "9", "GPIO2/SCK"],
  ["7", "GPIO0/TX", "8", "GPIO1/RX"],
];
const pinY = [308, 331, 353, 376, 398, 421, 444];

function SchematicCanvas() {
  return (
    <svg className="min-w-0 flex-1 self-stretch bg-[#222832]" aria-label="Schematic canvas">
      <path d={gridPath(499, 251, 75.1, -6, 18, -3, 8)} fill="#7c8087" />
      <g transform="translate(547.500 311.500)" fontFamily={stroke}>
        <path d="M1310 -61H-49V700" stroke="#8a8f96" fill="none" />
        <g stroke={WINE} fill="none">
          <path d="M1310 -1H9V700M1310 10H22V700M306 -1V10M602 -1V10M898 -1V10M1194 -1V10M9 295H22" />
        </g>
        <g fill={WINE} fontSize="12" textAnchor="middle">
          <text x="162" y="9">1</text>
          <text x="458" y="9">2</text>
          <text x="754" y="9">3</text>
          <text x="1050" y="9">4</text>
          <text x="16" y="151">A</text>
          <text x="16" y="447">B</text>
        </g>
        <g stroke={WIRE} fill="none">
          <path d="M55 135V377M116 135H191V489H530V444H507M116 218H168V511H552V421H507M116 286H138V534H575V398H507M116 353V556H597V376H507M297 398H236V225H507V90M552 45H695M552 135H695M597 90H650" />
        </g>
        <PushButton y={135} name="SW1" />
        <PushButton y={218} name="SW2" />
        <PushButton y={286} name="SW3" />
        <PushButton y={353} name="SW4" />
        <path d="M55 377V383M48 383H63L55 391ZM695 135V143M688 143H703L695 151ZM695 45V30M690 38L695 30L700 38" stroke={PIN} fill="none" />
        <SchLed x={522} name="D1" />
        <SchLed x={665} name="D2" />
        <NoConnect x={740} y={90} />
        {[[55, 218], [55, 286], [55, 353], [695, 45], [695, 135]].map(([x, y]) => (
          <circle key={`${x}-${y}`} cx={x} cy={y} r="3" fill={WIRE} />
        ))}
        <rect x="311" y="293" width="181" height="166" stroke={PIN} fill="none" />
        {chipPins.map(([ln, left, rn, right], i) => (
          <g key={ln}>
            <path d={`M297 ${pinY[i]}H311M492 ${pinY[i]}H507`} stroke={PIN} />
            <g fontSize="11" fill={VALUE}>
              <text x="317" y={pinY[i] + 4}>{left}</text>
              <text x="488" y={pinY[i] + 4} textAnchor="end">{right}</text>
            </g>
            <g fontSize="12" fill={PIN} textAnchor="middle">
              <text x="304" y={pinY[i] - 1}>{ln}</text>
              <text x="500" y={pinY[i] - 1}>{rn}</text>
            </g>
            {ln !== "5" && <NoConnect x={297} y={pinY[i]} />}
          </g>
        ))}
        <NoConnect x={507} y={353} />
        <path d="M507 308H522M514 303L522 308L514 313M507 331H514M514 324V338L522 331Z" stroke={PIN} fill="none" />
        <g fontSize="12" fill={VALUE}>
          <text x="531" y="312">+5V</text>
          <text x="531" y="335">GND</text>
          <text x="55" y="410" textAnchor="middle">GND</text>
          <text x="695" y="20" textAnchor="middle">+5V</text>
          <text x="695" y="170" textAnchor="middle">GND</text>
          <text x="402" y="282" textAnchor="middle">XIAO-RP2040-DIP</text>
          <text x="402" y="267" fill={REF} textAnchor="middle">U1</text>
        </g>
      </g>
      <path d="M1280 162.500H1354M1317.500 125V200" stroke="#0c0f14" />
    </svg>
  );
}

const layers = [
  ["F.Cu", "#c83434"], ["B.Cu", "#4d7fc4"], ["F.Adhesive", "#840084"], ["B.Adhesive", "#000084"],
  ["F.Paste", "#a39390"], ["B.Paste", "#00b0b0"], ["F.Silkscreen", "#f2eda1"], ["B.Silkscreen", "#e8b2a7"],
  ["F.Mask", "#6d3a7a"], ["B.Mask", "#147d75"], ["User.Drawings", "#c2c2c2"], ["User.Comments", "#5994dc"],
  ["User.Eco1", "#b4dbd2"], ["User.Eco2", "#d8c852"], ["Edge.Cuts", "#d0d2cd"], ["Margin", "#ff26e2"],
  ["F.Courtyard", "#ff26e2"], ["B.Courtyard", "#26e9ff"], ["F.Fab", "#afafaf"], ["B.Fab", "#585d84"],
  ["User.1", "#c2c2c2"], ["User.2", "#5994dc"], ["User.3", "#b4dbd2"], ["User.4", "#d8c852"],
];

const filters = [
  "All items", "Locked items", "Footprints", "Text", "Tracks", "Vias",
  "Pads", "Graphics", "Zones", "Rule Areas", "Dimensions", "Other items",
];

function Appearance() {
  const [tab, setTab] = useState("Layers");
  return (
    <aside className="flex w-[238px] shrink-0 flex-col text-[13px] text-[#dedede]">
      <h2 className="h-[17px] bg-[#2c2c2c] pl-[3px] text-[11px] leading-[14px] text-[#eee]">Appearance</h2>
      <div className="mt-[5px] flex h-[38px] gap-2 border-y border-l border-[#1a1a1a] pl-2 text-sm">
        {["Layers", "Objects", "Nets"].map((name) => (
          <button key={name} onClick={() => setTab(name)} className={`border-b-[3px] px-3 ${tab === name ? "border-[#e95420]" : "border-transparent"}`}>
            {name}
          </button>
        ))}
      </div>
      <ul className="h-[483px] border-l border-[#1a1a1a] bg-[#4a4a4a] pt-px">
        {layers.map(([name, color]) => (
          <li key={name} className={`flex h-[19px] items-center ${name === "Edge.Cuts" ? "bg-[#595959]" : ""}`}>
            <span className="w-4 pl-1 text-[9px] text-[#4444ff]">{name === "Edge.Cuts" ? "▶" : ""}</span>
            <span
              className={`h-[14px] w-4 ${name.endsWith("Mask") ? "bg-[repeating-conic-gradient(#0004_0_25%,transparent_0_50%)] bg-[length:12px_14px]" : ""}`}
              style={{ backgroundColor: color }}
            />
            <button aria-label={`Toggle ${name}`} className="ml-[6px] flex size-4 items-center justify-center rounded-full bg-[#3f3f3f]">
              <svg viewBox="0 0 12 8" className="h-2 w-3">
                <path d="M0 4Q6 -4 12 4Q6 12 0 4Z" fill={L} />
                <circle cx="6" cy="4" r="2" fill={L} stroke="#444" />
              </svg>
            </button>
            <span className="ml-[5px]">{name}</span>
          </li>
        ))}
      </ul>
      <button className="flex h-[26px] items-center gap-1 border-b border-[#1a1a1a] bg-[#272727] pl-[14px] text-left">
        <svg viewBox="0 0 6 10" className="h-[10px] w-[6px]"><path d="M0 0L6 5L0 10Z" fill="#fff" /></svg>
        Layer Display Options
      </button>
      <div className="flex flex-col pr-[6px] pl-[7px]">
        <label htmlFor="presets" className="mt-[10px] h-5 leading-5">Presets (Ctrl+Tab):</label>
        <Picker id="presets" value="All Layers" className="h-[34px] text-sm" />
        <label htmlFor="viewports" className="mt-[3px] h-5 leading-5">Viewports (Shift+Tab):</label>
        <Picker id="viewports" value="---" className="h-[34px] text-sm" />
      </div>
      <h2 className="mt-[11px] h-[17px] bg-[#2c2c2c] pl-[3px] text-[11px] leading-[14px] text-[#eee]">Selection Filter</h2>
      <div className="mt-[5px] grid grid-cols-[108px_1fr] pl-[9px]">
        {filters.map((name) => (
          <label key={name} className="flex h-[21px] items-center gap-1">
            <span className="grid">
              <input type="checkbox" defaultChecked={name !== "Locked items"} className="peer col-start-1 row-start-1 size-4 appearance-none rounded-[3px] border border-[#1c1c1c] bg-[#333] checked:border-[#e95420] checked:bg-[#e95420]" />
              <svg viewBox="0 0 16 16" className="pointer-events-none invisible col-start-1 row-start-1 size-4 peer-checked:visible"><path d="M4 8L7 11L12.500 5" fill="none" stroke="#fff" strokeWidth="2" /></svg>
            </span>
            {name}
          </label>
        ))}
      </div>
    </aside>
  );
}

function Divider() {
  return <div className="mx-[5px] h-[26px] w-px shrink-0 bg-[#5c5c5c]" />;
}

function PcbEditor() {
  const stats = [["Pads", "48", "w-16"], ["Vias", "12", "w-[59px]"], ["Track Segments", "82", "w-[136px]"], ["Nets", "16", "w-[62px]"], ["Unrouted", "0", "w-20"]];
  return (
    <section className="flex min-w-0 flex-1 flex-col">
      <SystemBar />
      <TitleBar title="*Macroboard-v2 — PCB Editor" />
      <MenuBar items={["File", "Edit", "View", "Place", "Route", "Inspect", "Tools", "Preferences", "Help"]} />
      <ToolStrip tools="save | boardSetup | page print plot | undo redo | find | refresh zoomIn zoomOut zoomFit zoomObjects zoomSelection | rotateCcw rotateCw flipV flipH group ungroup lock unlock | footprintEdit library fromSchematic | updatePcb drc | sheet | console" />
      <div className="flex h-[38px] items-center pb-px pl-[5px] text-sm">
        <Picker label="Track width" value="Track: use netclass width" className="h-[34px] w-[202px]" />
        <button aria-label="Automatic width" className="ml-[3px] flex size-[30px] items-center justify-center border border-[#e95420] bg-[#58200c]"><Icon name="trackWidth" /></button>
        <Divider />
        <Picker label="Via size" value="Via: use netclass sizes" className="h-[34px] w-[196px]" />
        <Divider />
        <Picker label="Active layer" value="Edge.Cuts" swatch className="h-[34px] w-[170px]" />
        <button aria-label="Layer pair" className="mr-[3px] ml-[5px]">
          <svg viewBox="0 0 24 24" className="size-6"><path d="M0 0H18L6 24H0Z" fill="#c83434" /><path d="M18 0H24V24H6Z" fill="#4d7fc4" /><path d="M17 0L7 24" stroke="#fff" strokeWidth="1.500" /></svg>
        </button>
        <Divider />
        <Picker label="Grid" value="0.2500 mm (9.84 mils)" className="h-[34px] w-[284px]" />
        <Divider />
        <Picker label="Zoom" value="Zoom 3.50" className="h-[34px] w-[126px]" />
      </div>
      <div className="flex flex-1">
        <div className="flex pt-[1px]"><ToolStrip vertical tools="*grid *gridOverride polar in mil *mm crosshair | angle45 | *ratsnest ratsCurved | netColors highContrast | *zoneFill zoneOutline | padSketch viaSketch trackSketch | *layers tools" /></div>
        <PcbCanvas />
        <div className="flex w-[39px] pt-[1px]"><ToolStrip vertical tools="*select highlight | footprint route tune via zone ruleArea | line arc rect circle polygon bezier image text textBox table dimension delete | gridOrigin measure" /></div>
        <Appearance />
      </div>
      <dl className="flex h-9 pl-[15px] text-sm leading-[18px] text-[#dedede]">
        {stats.map(([name, value, width]) => (
          <div key={name} className={width}>
            <dt className="whitespace-nowrap">{name}</dt>
            <dd>{value}</dd>
          </div>
        ))}
      </dl>
      <footer className="flex h-[19px] overflow-hidden bg-[#2c2c2c] pl-[5px] text-sm leading-[22px] whitespace-nowrap text-[#dedede]">
        <span className="w-[683px]">Selection copied</span>
        <span className="w-[86px]">Z 2.99</span>
        <span className="w-[192px]">X 237.0000 Y 87.7500</span>
        <span className="w-[307px]">dx 237.0000 dy 87.7500 dist 252.7233</span>
        <span className="w-[221px]">grid 0.2500</span>
        <span className="w-[67px]">mm</span>
        <span>Select item(s)</span>
      </footer>
    </section>
  );
}

function SchematicEditor() {
  return (
    <section className="flex min-w-0 flex-1 flex-col">
      <SystemBar />
      <TitleBar title="Macroboard-v2 — Schematic Editor" />
      <MenuBar items={["File", "Edit", "View", "Place", "Inspect", "Tools", "Preferences", "Help"]} />
      <ToolStrip tools="save | sheetSetup | page print plot | paste | undo redoOff | find replace | refresh zoomIn zoomOut zoomFit zoomObjects zoomSelection | arrowLeft arrowUp arrowRight | rotateCcw rotateCw flipV flipH | symbolEdit library footprintEdit | annotate drc simulate assign table bom | board |" />
      <div className="flex flex-1">
        <div className="flex pt-[1px]"><ToolStrip vertical tools="*grid *gridOverride in *mil mm crosshair | symbolPins | angleFree *angle90 angle45 | *refs | hierarchy tools" /></div>
        <SchematicCanvas />
        <div className="flex pt-[1px]"><ToolStrip vertical tools="*select highlightNet | symbol power line bus busEntry noConnect junction label netClass ruleArea globalLabel hierLabel addSheet sheetPin syncPins | text textBox table rect circle arc bezier line image delete" /></div>
      </div>
      <div className="h-9" />
      <footer className="flex h-[19px] overflow-hidden bg-[#2c2c2c] pl-[690px] text-sm leading-[22px] whitespace-nowrap text-[#dedede]">
        <span className="w-[105px]">Z 1.65</span>
        <span className="w-[171px]">X 5450 Y -600</span>
        <span className="w-[307px]">dx 5450 dy -600 dist 5483</span>
        <span className="w-[290px]">grid 50</span>
        <span className="w-[144px]">mils</span>
        <span>Select item(s)</span>
      </footer>
    </section>
  );
}

export default function App() {
  return (
    <main className="flex min-h-screen bg-[#383838] font-['Noto_Sans',sans-serif]">
      <PcbEditor />
      <SchematicEditor />
    </main>
  );
}
